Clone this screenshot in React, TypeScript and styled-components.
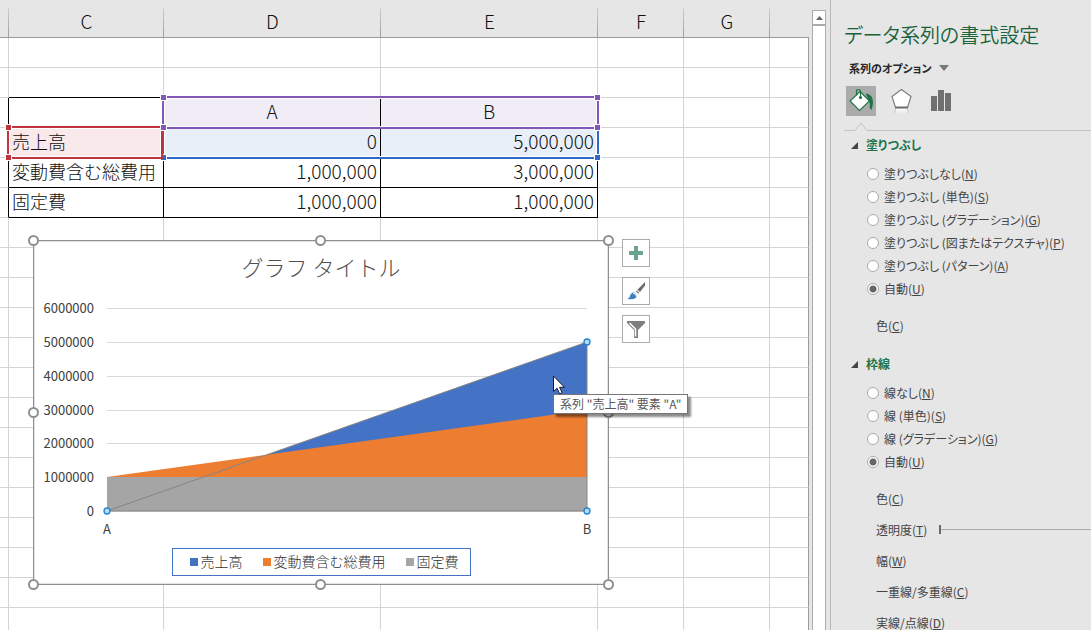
import React from "react";
import styled, { createGlobalStyle } from "styled-components";

const GlobalStyle = createGlobalStyle`
  *, *::before, *::after { box-sizing: border-box; }
  html, body { margin: 0; padding: 0; }
  body {
    background: #e6e6e6;
    color: #444444;
    font-family: "Noto Sans CJK JP", "Noto Sans", sans-serif;
    font-size: 12px;
  }
  button { font: inherit; color: inherit; padding: 0; margin: 0; }
`;

/* ---------- shell ---------- */

const Shell = styled.div`
  display: flex;
  height: 100vh;
  overflow: hidden;
  background: #e6e6e6;
`;

const SheetArea = styled.main`
  position: relative;
  flex: 1;
  min-width: 0;
  overflow: hidden;
`;

/* ---------- worksheet grid ---------- */

const Grid = styled.table`
  width: 100%;
  table-layout: fixed;
  border-collapse: separate;
  border-spacing: 0;
  font-weight: 300;
  color: #111111;
`;

const Col = styled.col<{ $width?: number }>`
  width: ${(p) => (p.$width ? `${p.$width}px` : "auto")};
`;

const ColumnHead = styled.th`
  height: 38px;
  padding: 6px 0 2px;
  border-bottom: 1px solid #9b9b9b;
  background: linear-gradient(#cfcfcf, #9b9b9b) right 8px / 1px 30px no-repeat #e6e6e6;
  font-size: 19px;
  font-weight: 300;
  line-height: 26px;
  &:last-child { background: #e6e6e6; }
`;

type Tint = "none" | "purple" | "red" | "blue";
const tints: Record<Tint, string> = {
  none: "#ffffff",
  purple: "#f1edf7",
  red: "#f9e9ea",
  blue: "#e8eff9",
};

const Cell = styled.td<{ $align?: string; $tint?: Tint; $inkRight?: boolean; $inkBottom?: boolean }>`
  height: 30px;
  padding: 0 3px 4px;
  overflow: hidden;
  white-space: nowrap;
  font-size: ${(p) => (p.$align ? 19 : 18)}px;
  line-height: 24px;
  text-align: ${(p) => p.$align ?? "left"};
  background: ${(p) => tints[p.$tint ?? "none"]};
  border-right: 1px solid ${(p) => (p.$inkRight ? "#000000" : "#d4d4d4")};
  border-bottom: 1px solid ${(p) => (p.$inkBottom ? "#000000" : "#d4d4d4")};
  &:last-child { border-right-color: #9b9b9b; }
`;

const RangeFrame = styled.div<{ $x: number; $y: number; $w: number; $h: number; $color: string }>`
  position: absolute;
  left: ${(p) => p.$x}px;
  top: ${(p) => p.$y}px;
  width: ${(p) => p.$w}px;
  height: ${(p) => p.$h}px;
  border: 2px solid ${(p) => p.$color};
  box-shadow: inset 0 0 0 1px #ffffff;
  pointer-events: none;
`;

const corners = {
  nw: "left: -4px; top: -4px;",
  ne: "right: -4px; top: -4px;",
  sw: "left: -4px; bottom: -4px;",
  se: "right: -4px; bottom: -4px;",
};

const RangeHandle = styled.i<{ $corner: keyof typeof corners; $color: string }>`
  position: absolute;
  ${(p) => corners[p.$corner]}
  width: 7px;
  height: 7px;
  border: 1px solid #ffffff;
  background: ${(p) => p.$color};
`;

/* ---------- chart ---------- */

const ChartFrame = styled.figure`
  position: absolute;
  left: 33px;
  top: 240px;
  width: 576px;
  height: 345px;
  margin: 0;
  padding-top: 10px;
  display: flex;
  flex-direction: column;
  align-items: center;
  background: #ffffff;
  border: 1px solid #8f8f8f;
  box-shadow: inset 0 0 0 1px #e2e2e2;
`;

const ChartTitle = styled.figcaption`
  margin-bottom: 2px;
  font-size: 22px;
  font-weight: 300;
  line-height: 30px;
  color: #505050;
`;

const Plot = styled.svg`
  display: block;
  font-family: "Noto Sans CJK JP", sans-serif;
  font-size: 13px;
`;

const Legend = styled.ul`
  display: flex;
  gap: 20px;
  margin: 9px 0 0;
  padding: 0 11px 0 17px;
  list-style: none;
  border: 1px solid #4472c4;
`;

const LegendItem = styled.li`
  display: flex;
  align-items: center;
  gap: 3px;
  font-size: 14px;
  font-weight: 300;
  line-height: 26px;
  color: #333333;
`;

const LegendText = styled.span`
  padding-bottom: 2px;
  line-height: 24px;
`;

const Swatch = styled.i<{ $color: string }>`
  width: 8px;
  height: 8px;
  background: ${(p) => p.$color};
`;

const FrameHandle = styled.i<{ $left: string; $top: string }>`
  position: absolute;
  left: ${(p) => p.$left};
  top: ${(p) => p.$top};
  width: 11px;
  height: 11px;
  margin-left: ${(p) => (p.$left === "100%" ? -5 : -6)}px;
  margin-top: ${(p) => (p.$top === "100%" ? -5 : -6)}px;
  border: 2px solid #8f8f8f;
  border-radius: 50%;
  background: #ffffff;
`;

const ChartTools = styled.div`
  position: absolute;
  left: 622px;
  top: 239px;
  display: flex;
  flex-direction: column;
  gap: 10px;
`;

const ChartTool = styled.button`
  display: flex;
  align-items: center;
  justify-content: center;
  width: 28px;
  height: 28px;
  background: #ffffff;
  border: 1px solid #ababab;
`;

const Tooltip = styled.div`
  position: absolute;
  left: 553px;
  top: 394px;
  padding: 0 6px;
  border: 1px solid #767676;
  background: #ffffff;
  box-shadow: 3px 3px 2px rgba(0, 0, 0, 0.45);
  color: #575757;
  font-size: 12px;
  line-height: 18px;
  white-space: nowrap;
`;

const Pointer = styled.svg`
  position: absolute;
  left: 552px;
  top: 375px;
`;

/* ---------- scroll bar ---------- */

const ScrollColumn = styled.div`
  display: flex;
  flex-direction: column;
  width: 21px;
  padding: 10px 4px 0 3px;
`;

const ScrollButton = styled.button`
  display: flex;
  align-items: center;
  justify-content: center;
  height: 15px;
  background: #ffffff;
  border: 1px solid #ababab;
`;

const ScrollThumb = styled.div`
  flex: 1;
  background: #ffffff;
  border: 1px solid #ababab;
  border-bottom: 0;
`;

/* ---------- format pane ---------- */

const Pane = styled.aside`
  width: 261px;
  padding: 19px 0 0 13px;
  border-left: 1px solid #b9b9b9;
  overflow: hidden;
  font-feature-settings: "palt";
`;

const PaneTitle = styled.h1`
  margin: 0;
  font-size: 20px;
  font-weight: 350;
  line-height: 32px;
  color: #1a6239;
  white-space: nowrap;
`;

const OptionsMenu = styled.button`
  display: flex;
  align-items: center;
  gap: 7px;
  margin: 7px 0 8px 5px;
  border: 0;
  background: none;
  font-size: 11px;
  font-weight: 700;
  line-height: 20px;
  color: #262626;
`;

const PaneTabs = styled.div`
  display: flex;
  gap: 10px;
  padding-left: 2px;
`;

const PaneTab = styled.button<{ $active?: boolean }>`
  width: 30px;
  height: 30px;
  border: 0;
  background: ${(p) => (p.$active ? "#ababab" : "transparent")};
  svg { display: block; }
`;

const TabRule = styled.div`
  display: flex;
  align-items: flex-end;
  margin-top: 6px;
  svg { display: block; }
`;

const RuleLine = styled.span<{ $width?: number }>`
  ${(p) => (p.$width ? `width: ${p.$width}px;` : "flex: 1;")}
  border-top: 1px solid #c3c3c3;
`;

const Section = styled.section`
  padding: 4px 0 9px;
`;

const SectionTitle = styled.h2`
  display: flex;
  align-items: center;
  gap: 8px;
  margin: 0 0 7px 7px;
  font-size: 12px;
  font-weight: 700;
  line-height: 20px;
  color: #217346;
`;

const RadioList = styled.div`
  display: flex;
  flex-direction: column;
  padding-left: 23px;
  margin-bottom: 10px;
`;

const RadioRow = styled.label`
  display: flex;
  align-items: center;
  gap: 5px;
  height: 23px;
  white-space: nowrap;
`;

const Radio = styled.input`
  appearance: none;
  flex: none;
  width: 12px;
  height: 12px;
  margin: 0;
  border: 1px solid #ababab;
  border-radius: 50%;
  background: #ffffff;
  &:checked { background: radial-gradient(circle, #666666 0 3px, #ffffff 4px); }
`;

const Field = styled.div`
  display: flex;
  align-items: center;
  gap: 12px;
  height: 31px;
  padding-left: 32px;
  white-space: nowrap;
`;

const Slider = styled.input`
  appearance: none;
  flex: 1;
  min-width: 0;
  height: 10px;
  margin: 0;
  background: linear-gradient(#ababab, #ababab) center / 100% 1px no-repeat;
  &::-webkit-slider-thumb {
    appearance: none;
    width: 2px;
    height: 9px;
    background: #6a6a6a;
  }
`;

/* ---------- data ---------- */

const series = [
  { name: "売上高", color: "#4472c4", values: [0, 5000000] },
  { name: "変動費含む総費用", color: "#ed7d31", values: [1000000, 3000000] },
  { name: "固定費", color: "#a5a5a5", values: [1000000, 1000000] },
];
const ticks = [0, 1, 2, 3, 4, 5, 6].map((n) => n * 1000000);
const columnWidths = [9, 155, 217, 217, 86, 86];
const emptyRows = Array.from({ length: 40 }, (_, i) => i);

const purple = "#8357b9";
const red = "#c0343f";
const blue = "#2f69c8";

const baseline = 228;
const plotLeft = 73;
const plotRight = 553;
const yOf = (value: number) => Math.round(baseline - (value / 1000000) * 33.8);

/* ---------- parts ---------- */

function BlankCells({ count }: { count: number }) {
  return (
    <>
      {Array.from({ length: count }, (_, i) => (
        <Cell key={i} />
      ))}
    </>
  );
}

function Worksheet() {
  return (
    <Grid>
      <colgroup>
        {columnWidths.map((w, i) => (
          <Col key={i} $width={w} />
        ))}
        <Col />
      </colgroup>
      <thead>
        <tr>
          {["", "C", "D", "E", "F", "G", ""].map((name, i) => (
            <ColumnHead key={i} scope="col">{name}</ColumnHead>
          ))}
        </tr>
      </thead>
      <tbody>
        <tr><BlankCells count={7} /></tr>
        <tr>
          <Cell />
          <Cell $inkBottom />
          <Cell $inkBottom />
          <Cell $inkBottom />
          <BlankCells count={3} />
        </tr>
        <tr>
          <Cell $inkRight />
          <Cell $inkRight $inkBottom />
          <Cell $align="center" $tint="purple" $inkRight $inkBottom>A</Cell>
          <Cell $align="center" $tint="purple" $inkRight $inkBottom>B</Cell>
          <BlankCells count={3} />
        </tr>
        {series.map((s, i) => (
          <tr key={s.name}>
            <Cell $inkRight />
            <Cell $tint={i === 0 ? "red" : "none"} $inkRight $inkBottom>{s.name}</Cell>
            {s.values.map((v, k) => (
              <Cell key={k} $align="right" $tint={i === 0 ? "blue" : "none"} $inkRight $inkBottom>
                {v.toLocaleString("en-US")}
              </Cell>
            ))}
            <BlankCells count={3} />
          </tr>
        ))}
        {emptyRows.map((r) => (
          <tr key={r}><BlankCells count={7} /></tr>
        ))}
      </tbody>
    </Grid>
  );
}

function Ranges() {
  return (
    <>
      <RangeFrame $x={162} $y={126} $w={437} $h={33} $color={blue}>
        <RangeHandle $corner="sw" $color={blue} />
        <RangeHandle $corner="se" $color={blue} />
      </RangeFrame>
      <RangeFrame $x={7} $y={126} $w={156} $h={33} $color={red}>
        <RangeHandle $corner="nw" $color={red} />
        <RangeHandle $corner="sw" $color={red} />
      </RangeFrame>
      <RangeFrame $x={162} $y={96} $w={437} $h={33} $color={purple}>
        <RangeHandle $corner="nw" $color={purple} />
        <RangeHandle $corner="ne" $color={purple} />
        <RangeHandle $corner="sw" $color={purple} />
        <RangeHandle $corner="se" $color={purple} />
      </RangeFrame>
    </>
  );
}

function Chart() {
  const selected = series[0].values;
  const handles = [
    [plotLeft, baseline],
    [plotRight, yOf(selected[1])],
    [plotRight, baseline],
  ];
  const frame = ["0%", "50%", "100%"];
  return (
    <ChartFrame>
      <ChartTitle>グラフ タイトル</ChartTitle>
      <Plot width="574" height="256" viewBox="0 0 574 256">
        {ticks.map((t) => (
          <g key={t}>
            <rect x={plotLeft} y={yOf(t)} width={plotRight - plotLeft} height="1" fill="#d9d9d9" />
            <text x="60" y={yOf(t) + 5} textAnchor="end" fill="#404040">{t}</text>
          </g>
        ))}
        {series.map((s) => (
          <polygon
            key={s.name}
            fill={s.color}
            points={`${plotLeft},${baseline} ${plotLeft},${yOf(s.values[0])} ${plotRight},${yOf(s.values[1])} ${plotRight},${baseline}`}
          />
        ))}
        <polygon
          fill="none"
          stroke="#858585"
          points={`${plotLeft},${baseline} ${plotRight},${yOf(selected[1])} ${plotRight},${baseline}`}
        />
        {handles.map(([x, y]) => (
          <circle key={`${x}-${y}`} cx={x} cy={y} r="3" fill="#b5dbf5" stroke="#1f83d2" strokeWidth="1.3" />
        ))}
        <text x={plotLeft} y="251" textAnchor="middle" fill="#404040">A</text>
        <text x={plotRight} y="251" textAnchor="middle" fill="#404040">B</text>
      </Plot>
      <Legend>
        {series.map((s) => (
          <LegendItem key={s.name}>
            <Swatch $color={s.color} />
            <LegendText>{s.name}</LegendText>
          </LegendItem>
        ))}
      </Legend>
      {frame.map((top) =>
        frame.map((left) =>
          top === "50%" && left === "50%" ? null : (
            <FrameHandle key={left + top} $left={left} $top={top} />
          )
        )
      )}
    </ChartFrame>
  );
}

function ChartToolbar() {
  return (
    <ChartTools>
      <ChartTool aria-label="グラフ要素">
        <svg width="14" height="14" viewBox="0 0 14 14"><path d="M5 0h4v5h5v4H9v5H5V9H0V5h5z" fill="#68a58c" /></svg>
      </ChartTool>
      <ChartTool aria-label="グラフ スタイル">
        <svg width="20" height="20" viewBox="0 0 20 20">
          <path d="M19 1v3.5L14 11l-2.600-2.200z" fill="#6d6d6d" />
          <path d="M10.800 9.400l2.600 2.200-1.200 1.200-2.500-2.200z" fill="#8a8a8a" />
          <path d="M1 18c2-.5 2.500-2 3.200-3.600C5.200 12 7.200 11 9 12c2 1.200 2.200 3.400.8 4.800C8 18.500 4.500 18.400 1 18z" fill="#3f7fbf" />
          <path d="M7.300 13c1.600-.9 3.300.5 3 2.300" fill="none" stroke="#ffffff" strokeWidth="1.200" />
        </svg>
      </ChartTool>
      <ChartTool aria-label="グラフ フィルター">
        <svg width="18" height="17" viewBox="0 0 18 17">
          <path d="M0 0h18v2l-7 7v8H7V9L0 2z" fill="#7f7f7f" />
          <path d="M2.500 2l6 6v7.500" fill="none" stroke="#ffffff" strokeWidth="1.500" />
        </svg>
      </ChartTool>
    </ChartTools>
  );
}

function Option({ group, text, hotkey, checked }: { group: string; text: string; hotkey: string; checked?: boolean }) {
  return (
    <RadioRow>
      <Radio type="radio" name={group} defaultChecked={checked} />
      <span>{text}(<u>{hotkey}</u>)</span>
    </RadioRow>
  );
}

function Caret() {
  return (
    <svg width="7" height="7" viewBox="0 0 7 7"><path d="M7 0v7H0z" fill="#444444" /></svg>
  );
}

function FormatPane() {
  return (
    <Pane>
      <PaneTitle>データ系列の書式設定</PaneTitle>
      <OptionsMenu>
        系列のオプション
        <svg width="10" height="6" viewBox="0 0 10 6"><path d="M0 0h10L5 6z" fill="#777777" /></svg>
      </OptionsMenu>
      <PaneTabs>
        <PaneTab $active aria-label="塗りつぶしと線">
          <svg width="30" height="30" viewBox="0 0 30 30">
            <path d="M14 5.500L23.500 15 13.500 24.500 4 15z" fill="#ffffff" stroke="#217346" strokeWidth="1.200" />
            <path d="M10.500 9.500V5.500q0-2 2-2t2 2V11" fill="none" stroke="#217346" strokeWidth="1.200" />
            <circle cx="14.500" cy="11.500" r="1.600" fill="#217346" />
            <path d="M19.500 7.500q7.500.5 7.500 8.500 0 4-1.500 8-1.500-1-2-3 1-3-.5-6z" fill="#217346" />
          </svg>
        </PaneTab>
        <PaneTab aria-label="効果">
          <svg width="30" height="30" viewBox="0 0 30 30">
            <defs>
              <linearGradient id="fade" x1="0" y1="0" x2="0" y2="1">
                <stop offset="0" stopColor="#ffffff" />
                <stop offset="1" stopColor="#e6e6e6" />
              </linearGradient>
            </defs>
            <path d="M9.500 22.500h12l1 5h-14z" fill="url(#fade)" />
            <path d="M9.500 23l-1 4M21.500 23l1 4" stroke="#c4c4c4" />
            <path d="M15.500 3.500l9.500 7-3.500 11h-12l-3.500-11z" fill="#ffffff" stroke="#7f7f7f" strokeWidth="1.200" />
            <path d="M9 21.500h13" stroke="#6d6d6d" strokeWidth="2" />
          </svg>
        </PaneTab>
        <PaneTab aria-label="系列のオプション">
          <svg width="30" height="30" viewBox="0 0 30 30">
            <path d="M5 10h6v15H5zM12 4h6v21h-6zM19 7h6v18h-6z" fill="#707070" />
          </svg>
        </PaneTab>
      </PaneTabs>
      <TabRule>
        <RuleLine $width={11} />
        <svg width="12" height="9" viewBox="0 0 12 9"><path d="M0 8.500L6 1l6 7.500" fill="none" stroke="#c3c3c3" /></svg>
        <RuleLine />
      </TabRule>
      <Section>
        <SectionTitle><Caret />塗りつぶし</SectionTitle>
        <RadioList>
          <Option group="fill" text="塗りつぶしなし" hotkey="N" />
          <Option group="fill" text="塗りつぶし (単色)" hotkey="S" />
          <Option group="fill" text="塗りつぶし (グラデーション)" hotkey="G" />
          <Option group="fill" text="塗りつぶし (図またはテクスチャ)" hotkey="P" />
          <Option group="fill" text="塗りつぶし (パターン)" hotkey="A" />
          <Option group="fill" text="自動" hotkey="U" checked />
        </RadioList>
        <Field><span>色(<u>C</u>)</span></Field>
      </Section>
      <Section>
        <SectionTitle><Caret />枠線</SectionTitle>
        <RadioList>
          <Option group="border" text="線なし" hotkey="N" />
          <Option group="border" text="線 (単色)" hotkey="S" />
          <Option group="border" text="線 (グラデーション)" hotkey="G" />
          <Option group="border" text="自動" hotkey="U" checked />
        </RadioList>
        <Field><span>色(<u>C</u>)</span></Field>
        <Field>
          <label htmlFor="transparency">透明度(<u>T</u>)</label>
          <Slider id="transparency" type="range" min="0" max="100" defaultValue="0" />
        </Field>
        <Field><span>幅(<u>W</u>)</span></Field>
        <Field><span>一重線/多重線(<u>C</u>)</span></Field>
        <Field><span>実線/点線(<u>D</u>)</span></Field>
      </Section>
    </Pane>
  );
}

export default function App() {
  return (
    <>
      <GlobalStyle />
      <Shell>
        <SheetArea>
          <Worksheet />
          <Ranges />
          <Chart />
          <ChartToolbar />
          <Tooltip role="tooltip">系列 "売上高" 要素 "A"</Tooltip>
          <Pointer width="14" height="20" viewBox="0 0 14 20">
            <path d="M1.500 1v15.500l3.600-3.300 2.500 5.600 2.500-1.100-2.500-5.400h4.900z" fill="#ffffff" stroke="#1a1a2e" />
          </Pointer>
        </SheetArea>
        <ScrollColumn>
          <ScrollButton aria-label="上へスクロール">
            <svg width="7" height="4" viewBox="0 0 7 4"><path d="M0 4h7L3.500 0z" fill="#666666" /></svg>
          </ScrollButton>
          <ScrollThumb />
        </ScrollColumn>
        <FormatPane />
      </Shell>
    </>
  );
}
